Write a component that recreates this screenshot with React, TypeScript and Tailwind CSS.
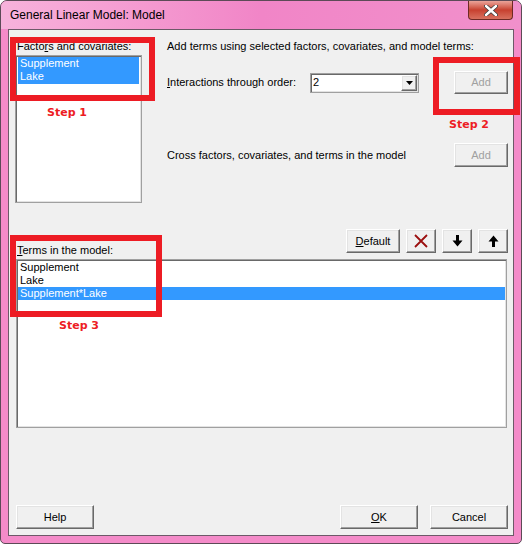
import React from "react";

const font = "font-['Liberation_Sans',Arial,sans-serif]";
const raised =
  "flex items-center justify-center bg-[#f0f0f0] border border-t-white border-l-white border-r-[#696969] border-b-[#696969] shadow-[inset_-1px_-1px_0_#a0a0a0,inset_1px_1px_0_#e3e3e3]";
const sunken =
  "bg-white border border-[#a0a0a0] shadow-[inset_1px_1px_0_#696969,inset_-1px_-1px_0_#e3e3e3]";

function Btn({ w, h, children, disabled }: { w: string; h: string; children: React.ReactNode; disabled?: boolean }) {
  return (
    <div className={`${raised} ${w} ${h} ${disabled ? "text-[#a0a0a0]" : "text-black"}`}>{children}</div>
  );
}

function XIcon() {
  return (
    <svg width="14" height="14" viewBox="0 0 14 14">
      <path d="M1 1 L13 13 M13 1 L1 13" stroke="#9b0f0f" strokeWidth="1.8" fill="none" />
    </svg>
  );
}

function DownIcon() {
  return (
    <svg width="11" height="12" viewBox="0 0 11 12">
      <path d="M4 0 H7 V5.5 H10.5 L5.5 11.5 L0.5 5.5 H4 Z" fill="#000" />
    </svg>
  );
}

function UpIcon() {
  return (
    <svg width="11" height="12" viewBox="0 0 11 12">
      <path d="M4 12 H7 V6.5 H10.5 L5.5 0.5 L0.5 6.5 H4 Z" fill="#000" />
    </svg>
  );
}

export default function App() {
  return (
    <div
      className={`${font} relative w-[522px] h-[544px] overflow-hidden flex flex-col rounded-t-[7px] rounded-b-[5px] border border-[#5d4a57] bg-[#f48bc9] text-[11px] text-black`}
    >
      {/* title bar */}
      <div className="h-[28px] flex items-center pl-[9px] bg-gradient-to-r from-[#f7b2db] via-[#f185c7] to-[#f190cb]">
        <span className="text-[12px] text-black">General Linear Model: Model</span>
      </div>
      <div className="absolute top-0 right-[8px] w-[45px] h-[19px] rounded-b-[4px] border border-t-0 border-[#6e2a24] bg-gradient-to-b from-[#eaa39a] via-[#c7402f] to-[#d8705f] flex items-center justify-center">
        <svg width="14" height="11" viewBox="0 0 14 11">
          <path d="M2 1 L12 10 M12 1 L2 10" stroke="#3a3a3a" strokeWidth="4" strokeLinecap="round" />
          <path d="M2 1 L12 10 M12 1 L2 10" stroke="#ffffff" strokeWidth="2.4" strokeLinecap="round" />
        </svg>
      </div>

      {/* client area */}
      <div className="mx-[7px] h-[507px] border border-[#6d5968] bg-[#f0f0f0] flex flex-col">
        {/* top section */}
        <div className="flex">
          <div className="pl-[6px] pt-[10px] flex flex-col">
            <div className="pl-[2px] h-[13px] leading-[13px]">
              Facto<u>r</u>s and covariates:
            </div>
            <div className={`${sunken} mt-[2px] w-[127px] h-[148px] px-[2px] pt-[1px]`}>
              <div className="bg-[#3399ff] text-white">
                <div className="h-[13px] leading-[13px] pl-[2px]">Supplement</div>
                <div className="h-[14px] leading-[13px] pl-[2px]">Lake</div>
              </div>
            </div>
          </div>
          <div className="ml-[25px] w-[341px] pt-[10px] flex flex-col">
            <div className="h-[13px] leading-[13px]">
              Add terms using selected factors, covariates, and model terms:
            </div>
            <div className="mt-[18px] flex items-center h-[23px]">
              <div className="w-[143px]">
                <u>I</u>nteractions through order:
              </div>
              <div className={`${sunken} w-[109px] h-[20px] flex items-center justify-between pl-[2px] pr-[1px]`}>
                <span>2</span>
                <div className={`${raised} w-[16px] h-[16px]`}>
                  <svg width="7" height="4" viewBox="0 0 7 4">
                    <path d="M0 0 H7 L3.5 4 Z" fill="#000" />
                  </svg>
                </div>
              </div>
              <div className="flex-1" />
              <Btn w="w-[54px]" h="h-[23px]" disabled>
                Add
              </Btn>
            </div>
            <div className="mt-[49px] flex items-center justify-between h-[24px]">
              <div>Cross factors, covariates, and terms in the model</div>
              <Btn w="w-[54px]" h="h-[24px]" disabled>
                Add
              </Btn>
            </div>
          </div>
        </div>

        {/* middle row */}
        <div className="mt-[26px] pl-[7px] pr-[5px] flex justify-between items-start h-[28px]">
          <div className="mt-[15px] pl-[1px] h-[13px] leading-[13px]">
            <u>T</u>erms in the model:
          </div>
          <div className="flex gap-[6px]">
            <Btn w="w-[54px]" h="h-[24px]">
              <span>
                <u>D</u>efault
              </span>
            </Btn>
            <Btn w="w-[30px]" h="h-[24px]">
              <XIcon />
            </Btn>
            <Btn w="w-[30px]" h="h-[24px]">
              <DownIcon />
            </Btn>
            <Btn w="w-[30px]" h="h-[24px]">
              <UpIcon />
            </Btn>
          </div>
        </div>

        <div className={`${sunken} mt-[2px] ml-[7px] w-[491px] h-[169px] px-[1px] pt-[1px]`}>
          <div className="h-[13px] leading-[13px] pl-[2px]">Supplement</div>
          <div className="h-[13px] leading-[13px] pl-[2px]">Lake</div>
          <div className="h-[13px] leading-[13px] pl-[2px] bg-[#3399ff] text-white">Supplement*Lake</div>
        </div>

        {/* bottom buttons */}
        <div className="mt-auto mb-[6px] pl-[7px] pr-[5px] flex">
          <Btn w="w-[78px]" h="h-[24px]">
            Help
          </Btn>
          <div className="flex-1" />
          <Btn w="w-[78px]" h="h-[24px]">
            <span>
              <u>O</u>K
            </span>
          </Btn>
          <div className="ml-[12px]">
            <Btn w="w-[78px]" h="h-[24px]">
              Cancel
            </Btn>
          </div>
        </div>
      </div>

      {/* annotations overlay */}
      <div className="absolute left-[9px] top-[36px] w-[145px] h-[64px] border-[6px] border-[#ed1c24]" />
      <div className="absolute left-[432px] top-[56px] w-[87px] h-[58px] border-[6px] border-[#ed1c24]" />
      <div className="absolute left-[9px] top-[234px] w-[152px] h-[82px] border-[6px] border-[#ed1c24]" />
      <div className="absolute left-[46px] top-[104px] font-['DejaVu_Sans',sans-serif] font-bold text-[11px] text-[#ed1c24]">
        Step 1
      </div>
      <div className="absolute left-[448px] top-[116px] font-['DejaVu_Sans',sans-serif] font-bold text-[11px] text-[#ed1c24]">
        Step 2
      </div>
      <div className="absolute left-[58px] top-[317px] font-['DejaVu_Sans',sans-serif] font-bold text-[11px] text-[#ed1c24]">
        Step 3
      </div>
    </div>
  );
}
